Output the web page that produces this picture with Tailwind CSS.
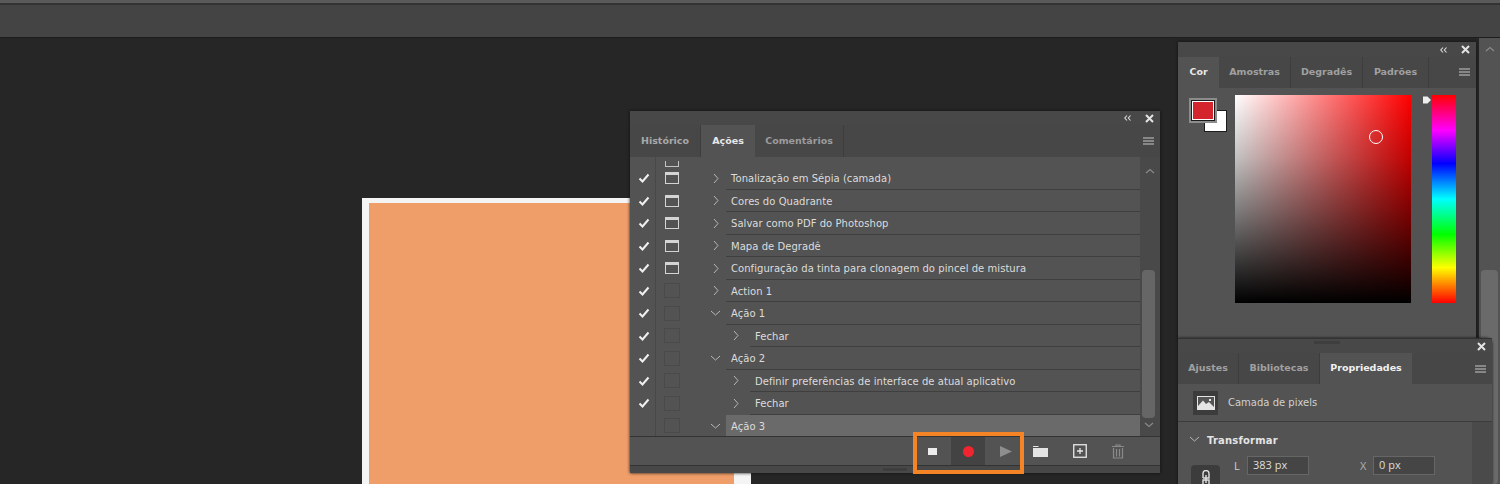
<!DOCTYPE html>
<html lang="pt">
<head>
<meta charset="utf-8">
<script src="https://cdn.jsdelivr.net/npm/@tailwindcss/browser@4"></script>
</head>
<body class="bg-[#262626]">
<div class="relative w-[1500px] h-[484px] overflow-hidden bg-[#262626] font-['DejaVu_Sans',sans-serif] text-[9.5px]">
  <!-- top bars -->
  <div class="h-[3px] bg-[#5a5a5a]"></div>
  <div class="h-[2px] bg-[#333333]"></div>
  <div class="h-[32px] bg-[#444444]"></div>
  <div class="h-px bg-[#1e1e1e]"></div>

  <!-- document canvas -->
  <div class="absolute left-[362px] top-[198px] w-[389px] h-[286px] bg-[#f4f4f4] pl-[7px] pt-[5px]">
    <div class="w-[365px] h-[281px] bg-[#ef9d69]"></div>
  </div>

  <!-- right scroll strip -->
  <div class="absolute left-[1479px] top-[38px] w-[21px] h-[446px] bg-[#535353]">
    <svg class="absolute left-[6px] top-[8px]" width="10" height="6" viewBox="0 0 10 6"><path d="M1 5 L5 1.5 L9 5" fill="none" stroke="#8a8a8a" stroke-width="1.2"/></svg>
    <div class="absolute left-[2px] top-[232px] w-[17px] h-[214px] bg-[#6a6a6a] rounded-sm"></div>
  </div>

  <!-- actions panel -->
  <div class="absolute left-[630px] top-[111px] w-[530px] h-[362px] bg-[#535353] flex flex-col shadow-[0_0_3px_#111]">
    <div class="h-[14px] bg-[#484848] flex items-center justify-end gap-[14px] pr-[6px] shrink-0">
      <svg width="7" height="6" viewBox="0 0 7 6"><path d="M3 .5 L.8 3 L3 5.5 M6.5 .5 L4.3 3 L6.5 5.5" fill="none" stroke="#ddd" stroke-width="1.1"/></svg>
      <svg width="9" height="9" viewBox="0 0 9 9"><path d="M1 1 L8 8 M8 1 L1 8" stroke="#e4e4e4" stroke-width="2"/></svg>
    </div>
    <div class="h-[32px] bg-[#474747] flex shrink-0 font-bold relative">
      <div class="w-[71px] flex items-center justify-center text-[#a9a9a9] border-r border-[#3d3d3d]">Histórico</div>
      <div class="w-[54px] flex items-center justify-center text-[#e8e8e8] bg-[#535353]">Ações</div>
      <div class="w-[89px] flex items-center justify-center text-[#9c9c9c] border-r border-[#3d3d3d]">Comentários</div>
      <svg class="absolute right-[6px] top-[12px]" width="11" height="8" viewBox="0 0 11 8"><path d="M0 1 H11 M0 4 H11 M0 7 H11" stroke="#c8c8c8" stroke-width="1"/></svg>
    </div>
    <div class="h-[280px] relative flex shrink-0 border-b border-[#333333] overflow-hidden text-[#dcdcdc] text-[10px]">
      <div class="w-[510px] flex flex-col shrink-0">
        <div class="h-[10px] flex shrink-0 items-end">
          <div class="w-[26px] h-full border-r border-[#484848]"></div>
          <div class="ml-[9px] w-[14px] h-[6px] border-x border-b border-[#c4c4c4]"></div>
        </div>
        <!-- rows -->
        <div class="h-[22.5px] flex items-center shrink-0">
          <div class="w-[26px] h-full flex items-center justify-center pl-[3px] border-r border-[#484848]"><svg width="12" height="10" viewBox="0 0 12 10"><path d="M1.5 5.5 L4.5 8.5 L10.5 1.5" fill="none" stroke="#f0f0f0" stroke-width="2"/></svg></div>
          <div class="w-[32px] pl-[9px] flex items-center"><div class="w-[14px] h-[12px] border border-[#d4d4d4] border-t-[3px]"></div></div>
          <div class="w-[37px] pl-[25px] flex items-center"><svg width="6" height="11" viewBox="0 0 6 11"><path d="M1 1 L5 5.5 L1 10" fill="none" stroke="#b8b8b8" stroke-width="1"/></svg></div>
          <div class="flex-1 h-full ml-[1px] pl-[5px] pt-[2px] flex items-center border-b border-[#3f3f3f] tracking-[.05px]">Tonalização em Sépia (camada)</div>
        </div>
        <div class="h-[22.5px] flex items-center shrink-0">
          <div class="w-[26px] h-full flex items-center justify-center pl-[3px] border-r border-[#484848]"><svg width="12" height="10" viewBox="0 0 12 10"><path d="M1.5 5.5 L4.5 8.5 L10.5 1.5" fill="none" stroke="#f0f0f0" stroke-width="2"/></svg></div>
          <div class="w-[32px] pl-[9px] flex items-center"><div class="w-[14px] h-[12px] border border-[#d4d4d4] border-t-[3px]"></div></div>
          <div class="w-[37px] pl-[25px] flex items-center"><svg width="6" height="11" viewBox="0 0 6 11"><path d="M1 1 L5 5.5 L1 10" fill="none" stroke="#b8b8b8" stroke-width="1"/></svg></div>
          <div class="flex-1 h-full ml-[1px] pl-[5px] pt-[2px] flex items-center border-b border-[#3f3f3f] tracking-[.05px]">Cores do Quadrante</div>
        </div>
        <div class="h-[22.5px] flex items-center shrink-0">
          <div class="w-[26px] h-full flex items-center justify-center pl-[3px] border-r border-[#484848]"><svg width="12" height="10" viewBox="0 0 12 10"><path d="M1.5 5.5 L4.5 8.5 L10.5 1.5" fill="none" stroke="#f0f0f0" stroke-width="2"/></svg></div>
          <div class="w-[32px] pl-[9px] flex items-center"><div class="w-[14px] h-[12px] border border-[#d4d4d4] border-t-[3px]"></div></div>
          <div class="w-[37px] pl-[25px] flex items-center"><svg width="6" height="11" viewBox="0 0 6 11"><path d="M1 1 L5 5.5 L1 10" fill="none" stroke="#b8b8b8" stroke-width="1"/></svg></div>
          <div class="flex-1 h-full ml-[1px] pl-[5px] pt-[2px] flex items-center border-b border-[#3f3f3f] tracking-[.05px]">Salvar como PDF do Photoshop</div>
        </div>
        <div class="h-[22.5px] flex items-center shrink-0">
          <div class="w-[26px] h-full flex items-center justify-center pl-[3px] border-r border-[#484848]"><svg width="12" height="10" viewBox="0 0 12 10"><path d="M1.5 5.5 L4.5 8.5 L10.5 1.5" fill="none" stroke="#f0f0f0" stroke-width="2"/></svg></div>
          <div class="w-[32px] pl-[9px] flex items-center"><div class="w-[14px] h-[12px] border border-[#d4d4d4] border-t-[3px]"></div></div>
          <div class="w-[37px] pl-[25px] flex items-center"><svg width="6" height="11" viewBox="0 0 6 11"><path d="M1 1 L5 5.5 L1 10" fill="none" stroke="#b8b8b8" stroke-width="1"/></svg></div>
          <div class="flex-1 h-full ml-[1px] pl-[5px] pt-[2px] flex items-center border-b border-[#3f3f3f] tracking-[.05px]">Mapa de Degradê</div>
        </div>
        <div class="h-[22.5px] flex items-center shrink-0">
          <div class="w-[26px] h-full flex items-center justify-center pl-[3px] border-r border-[#484848]"><svg width="12" height="10" viewBox="0 0 12 10"><path d="M1.5 5.5 L4.5 8.5 L10.5 1.5" fill="none" stroke="#f0f0f0" stroke-width="2"/></svg></div>
          <div class="w-[32px] pl-[9px] flex items-center"><div class="w-[14px] h-[12px] border border-[#d4d4d4] border-t-[3px]"></div></div>
          <div class="w-[37px] pl-[25px] flex items-center"><svg width="6" height="11" viewBox="0 0 6 11"><path d="M1 1 L5 5.5 L1 10" fill="none" stroke="#b8b8b8" stroke-width="1"/></svg></div>
          <div class="flex-1 h-full ml-[1px] pl-[5px] pt-[2px] flex items-center border-b border-[#3f3f3f] tracking-[.05px]">Configuração da tinta para clonagem do pincel de mistura</div>
        </div>
        <div class="h-[22.5px] flex items-center shrink-0">
          <div class="w-[26px] h-full flex items-center justify-center pl-[3px] border-r border-[#484848]"><svg width="12" height="10" viewBox="0 0 12 10"><path d="M1.5 5.5 L4.5 8.5 L10.5 1.5" fill="none" stroke="#f0f0f0" stroke-width="2"/></svg></div>
          <div class="w-[32px] pl-[8px] flex items-center"><div class="w-[16px] h-[15px] border border-[#4a4a4a]"></div></div>
          <div class="w-[37px] pl-[25px] flex items-center"><svg width="6" height="11" viewBox="0 0 6 11"><path d="M1 1 L5 5.5 L1 10" fill="none" stroke="#b8b8b8" stroke-width="1"/></svg></div>
          <div class="flex-1 h-full ml-[1px] pl-[5px] pt-[2px] flex items-center border-b border-[#3f3f3f] tracking-[.05px]">Action 1</div>
        </div>
        <div class="h-[22.5px] flex items-center shrink-0">
          <div class="w-[26px] h-full flex items-center justify-center pl-[3px] border-r border-[#484848]"><svg width="12" height="10" viewBox="0 0 12 10"><path d="M1.5 5.5 L4.5 8.5 L10.5 1.5" fill="none" stroke="#f0f0f0" stroke-width="2"/></svg></div>
          <div class="w-[32px] pl-[8px] flex items-center"><div class="w-[16px] h-[15px] border border-[#4a4a4a]"></div></div>
          <div class="w-[37px] pl-[22px] flex items-center"><svg width="11" height="6" viewBox="0 0 11 6"><path d="M1 1 L5.5 5 L10 1" fill="none" stroke="#b8b8b8" stroke-width="1"/></svg></div>
          <div class="flex-1 h-full ml-[1px] pl-[5px] pt-[2px] flex items-center border-b border-[#3f3f3f] tracking-[.05px]">Ação 1</div>
        </div>
        <div class="h-[22.5px] flex items-center shrink-0">
          <div class="w-[26px] h-full flex items-center justify-center pl-[3px] border-r border-[#484848]"><svg width="12" height="10" viewBox="0 0 12 10"><path d="M1.5 5.5 L4.5 8.5 L10.5 1.5" fill="none" stroke="#f0f0f0" stroke-width="2"/></svg></div>
          <div class="w-[32px] pl-[8px] flex items-center"><div class="w-[16px] h-[15px] border border-[#4a4a4a]"></div></div>
          <div class="w-[61px] pl-[45px] flex items-center"><svg width="6" height="11" viewBox="0 0 6 11"><path d="M1 1 L5 5.5 L1 10" fill="none" stroke="#b8b8b8" stroke-width="1"/></svg></div>
          <div class="flex-1 h-full ml-[1px] pl-[5px] pt-[2px] flex items-center border-b border-[#3f3f3f] tracking-[.05px]">Fechar</div>
        </div>
        <div class="h-[22.5px] flex items-center shrink-0">
          <div class="w-[26px] h-full flex items-center justify-center pl-[3px] border-r border-[#484848]"><svg width="12" height="10" viewBox="0 0 12 10"><path d="M1.5 5.5 L4.5 8.5 L10.5 1.5" fill="none" stroke="#f0f0f0" stroke-width="2"/></svg></div>
          <div class="w-[32px] pl-[8px] flex items-center"><div class="w-[16px] h-[15px] border border-[#4a4a4a]"></div></div>
          <div class="w-[37px] pl-[22px] flex items-center"><svg width="11" height="6" viewBox="0 0 11 6"><path d="M1 1 L5.5 5 L10 1" fill="none" stroke="#b8b8b8" stroke-width="1"/></svg></div>
          <div class="flex-1 h-full ml-[1px] pl-[5px] pt-[2px] flex items-center border-b border-[#3f3f3f] tracking-[.05px]">Ação 2</div>
        </div>
        <div class="h-[22.5px] flex items-center shrink-0">
          <div class="w-[26px] h-full flex items-center justify-center pl-[3px] border-r border-[#484848]"><svg width="12" height="10" viewBox="0 0 12 10"><path d="M1.5 5.5 L4.5 8.5 L10.5 1.5" fill="none" stroke="#f0f0f0" stroke-width="2"/></svg></div>
          <div class="w-[32px] pl-[8px] flex items-center"><div class="w-[16px] h-[15px] border border-[#4a4a4a]"></div></div>
          <div class="w-[61px] pl-[45px] flex items-center"><svg width="6" height="11" viewBox="0 0 6 11"><path d="M1 1 L5 5.5 L1 10" fill="none" stroke="#b8b8b8" stroke-width="1"/></svg></div>
          <div class="flex-1 h-full ml-[1px] pl-[5px] pt-[2px] flex items-center border-b border-[#3f3f3f] tracking-[.05px]">Definir preferências de interface de atual aplicativo</div>
        </div>
        <div class="h-[22.5px] flex items-center shrink-0">
          <div class="w-[26px] h-full flex items-center justify-center pl-[3px] border-r border-[#484848]"><svg width="12" height="10" viewBox="0 0 12 10"><path d="M1.5 5.5 L4.5 8.5 L10.5 1.5" fill="none" stroke="#f0f0f0" stroke-width="2"/></svg></div>
          <div class="w-[32px] pl-[8px] flex items-center"><div class="w-[16px] h-[15px] border border-[#4a4a4a]"></div></div>
          <div class="w-[61px] pl-[45px] flex items-center"><svg width="6" height="11" viewBox="0 0 6 11"><path d="M1 1 L5 5.5 L1 10" fill="none" stroke="#b8b8b8" stroke-width="1"/></svg></div>
          <div class="flex-1 h-full ml-[1px] pl-[5px] pt-[2px] flex items-center border-b border-[#3f3f3f] tracking-[.05px]">Fechar</div>
        </div>
        <div class="h-[22.5px] flex items-center shrink-0">
          <div class="w-[26px] h-full border-r border-[#484848]"></div>
          <div class="w-[32px] pl-[8px] flex items-center"><div class="w-[16px] h-[15px] border border-[#4a4a4a]"></div></div>
          <div class="w-[37px] pl-[22px] flex items-center"><svg width="11" height="6" viewBox="0 0 11 6"><path d="M1 1 L5.5 5 L10 1" fill="none" stroke="#b8b8b8" stroke-width="1"/></svg></div>
          <div class="flex-1 h-full ml-[1px] pl-[5px] pt-[1px] flex items-center bg-[#6a6a6a] tracking-[.05px]">Ação 3</div>
        </div>
      </div>
      <!-- list scrollbar -->
      <div class="flex-1 bg-[#494949] flex flex-col items-center relative">
        <svg class="mt-[11px]" width="10" height="6" viewBox="0 0 10 6"><path d="M1 5 L5 1.5 L9 5" fill="none" stroke="#8a8a8a" stroke-width="1.2"/></svg>
        <div class="absolute left-[2px] top-[113px] w-[13px] h-[148px] bg-[#666666] rounded-sm"></div>
        <svg class="absolute top-[265px] left-[4px]" width="10" height="6" viewBox="0 0 10 6"><path d="M1 1 L5 4.5 L9 1" fill="none" stroke="#8a8a8a" stroke-width="1.2"/></svg>
      </div>
    </div>
    <!-- footer -->
    <div class="h-[28px] flex items-center shrink-0 pl-[288px] bg-[#535353]">
      <div class="w-[33px] h-full flex items-center justify-center pr-[4px]"><div class="w-[9px] h-[7px] bg-[#ececec]"></div></div>
      <div class="w-[34px] h-full flex items-center justify-center bg-[#434343]"><div class="w-[11px] h-[11px] rounded-full bg-[#f0252f]"></div></div>
      <div class="w-[35px] h-full flex items-center justify-center pl-[6px]"><svg width="12" height="11" viewBox="0 0 12 11"><path d="M0 0 L12 5.5 L0 11 Z" fill="#8e8e8e"/></svg></div>
      <div class="w-[13px]"></div>
      <svg width="15" height="12" viewBox="0 0 15 12"><path d="M0 2 V1 H5 L6 2 Z M0 3 H15 V12 H0 Z" fill="#e4e4e4"/></svg>
      <div class="w-[25px]"></div>
      <svg width="14" height="14" viewBox="0 0 14 14"><rect x=".75" y=".75" width="12.5" height="12.5" fill="none" stroke="#e8e8e8" stroke-width="1.3"/><path d="M4 7 H10 M7 4 V10" stroke="#e8e8e8" stroke-width="1.3"/></svg>
      <div class="w-[24px]"></div>
      <svg width="14" height="15" viewBox="0 0 14 15"><path d="M1 2.5 H13 M5 2.5 V1 H9 V2.5 M2.5 4 V14 H11.5 V4 M5.5 5 V12.5 M8.5 5 V12.5" fill="none" stroke="#8a8a8a" stroke-width="1.2"/></svg>
    </div>
    <div class="h-[8px] bg-[#484848] border-t border-[#333333] flex items-center justify-center shrink-0">
      <div class="w-[24px] h-[3px] bg-[#3e3e3e]"></div>
    </div>
  </div>

  <!-- orange highlight -->
  <div class="absolute left-[913px] top-[432px] w-[111px] h-[42px] border-[4px] border-[#f58426]"></div>

  <!-- colour panel -->
  <div class="absolute left-[1178px] top-[42px] w-[298px] h-[296px] bg-[#535353] flex flex-col shadow-[0_0_3px_#111]">
    <div class="h-[15px] bg-[#484848] flex items-center justify-end gap-[14px] pr-[6px] shrink-0">
      <svg width="7" height="6" viewBox="0 0 7 6"><path d="M3 .5 L.8 3 L3 5.5 M6.5 .5 L4.3 3 L6.5 5.5" fill="none" stroke="#ddd" stroke-width="1.1"/></svg>
      <svg width="9" height="9" viewBox="0 0 9 9"><path d="M1 1 L8 8 M8 1 L1 8" stroke="#e4e4e4" stroke-width="2"/></svg>
    </div>
    <div class="h-[31px] bg-[#474747] flex shrink-0 font-bold relative">
      <div class="w-[41px] flex items-center justify-center text-[#e8e8e8] bg-[#535353]">Cor</div>
      <div class="w-[72px] flex items-center justify-center text-[#a0a0a0] border-r border-[#3d3d3d]">Amostras</div>
      <div class="w-[72px] flex items-center justify-center text-[#a0a0a0] border-r border-[#3d3d3d]">Degradês</div>
      <div class="w-[66px] flex items-center justify-center text-[#a0a0a0] border-r border-[#3d3d3d]">Padrões</div>
      <svg class="absolute right-[6px] top-[11px]" width="11" height="8" viewBox="0 0 11 8"><path d="M0 1 H11 M0 4 H11 M0 7 H11" stroke="#c8c8c8" stroke-width="1"/></svg>
    </div>
    <div class="flex-1 relative">
      <div class="absolute left-[26px] top-[22px] w-[23px] h-[22px] bg-white border border-[#1c1c1c]"></div>
      <div class="absolute left-[11px] top-[10px] w-[28px] h-[25px] bg-[#1c1c1c] border-[2px] border-[#8c8c8c] flex items-center justify-center"><div class="w-[22px] h-[19px] bg-[#d4252f] border border-white"></div></div>
      <div class="absolute left-[57px] top-[7px] w-[176px] h-[208px] bg-[linear-gradient(to_bottom,transparent,rgba(0,0,0,.24)_30%,rgba(0,0,0,.5)_55%,#000),linear-gradient(to_right,#fff,#ff0000)]">
        <div class="absolute left-[134px] top-[35px] w-[14px] h-[14px] rounded-full border border-white"></div>
      </div>
      <svg class="absolute left-[244px] top-[7px]" width="10" height="10" viewBox="0 0 10 10"><path d="M1 1.5 H5.5 L9 5 L5.5 8.5 H1 Z" fill="#eeeeee"/></svg>
      <div class="absolute left-[254px] top-[7px] w-[24px] h-[208px] bg-[linear-gradient(to_bottom,#ff0000,#ff00ff_17%,#0000ff_33%,#00ffff_50%,#00ff00_67%,#ffff00_83%,#ff0000)]"></div>
    </div>
  </div>

  <!-- properties panel -->
  <div class="absolute left-[1178px] top-[338px] w-[314px] h-[146px] bg-[#535353] rounded-tr-md flex flex-col shadow-[0_0_3px_#111]">
    <div class="h-[15px] bg-[#484848] border-t border-[#333333] flex items-center justify-end pr-[6px] shrink-0 relative">
      <div class="absolute left-[136px] top-[2px] w-[26px] h-[3px] bg-[#3e3e3e]"></div>
      <svg width="9" height="9" viewBox="0 0 9 9"><path d="M1 1 L8 8 M8 1 L1 8" stroke="#e4e4e4" stroke-width="2"/></svg>
    </div>
    <div class="h-[31px] bg-[#474747] flex shrink-0 font-bold relative">
      <div class="w-[61px] flex items-center justify-center text-[#a0a0a0] border-r border-[#3d3d3d]">Ajustes</div>
      <div class="w-[81px] flex items-center justify-center text-[#a0a0a0] border-r border-[#3d3d3d]">Bibliotecas</div>
      <div class="w-[92px] flex items-center justify-center text-[#f0f0f0] bg-[#535353]">Propriedades</div>
      <svg class="absolute right-[6px] top-[12px]" width="11" height="8" viewBox="0 0 11 8"><path d="M0 1 H11 M0 4 H11 M0 7 H11" stroke="#c8c8c8" stroke-width="1"/></svg>
    </div>
    <div class="h-[38px] flex items-center pl-[15px] gap-[10px] border-b border-[#3c3c3c] shrink-0 text-[#d0d0d0] text-[10px]">
      <div class="w-[25px] h-[24px] bg-[#3c3c3c] flex items-center justify-center">
        <svg width="18" height="14" viewBox="0 0 18 14"><path d="M0 0 H18 V14 H0 Z" fill="#e4e4e4"/><path d="M1 1 H17 V11 L12 6 L9 8 L6 4.5 L1 10 Z" fill="#555555"/><rect x="12" y="3" width="2" height="2" fill="#e4e4e4"/></svg>
      </div>
      Camada de pixels
    </div>
    <div class="flex-1 flex relative overflow-hidden">
      <svg class="absolute left-[11px] top-[14px]" width="11" height="6" viewBox="0 0 11 6"><path d="M1 1 L5.5 5 L10 1" fill="none" stroke="#b8b8b8" stroke-width="1"/></svg>
      <div class="absolute left-[29px] top-[11px] font-bold text-[#e4e4e4] tracking-[.2px] text-[10px]">Transformar</div>
      <div class="absolute left-[56px] top-[36px] text-[#d0d0d0] text-[11px] font-['Open_Sans',sans-serif]">L</div>
      <div class="absolute left-[69px] top-[34px] w-[62px] h-[19px] bg-[#454545] border border-[#666666] text-[#dedede] pl-[5px] flex items-center text-[11px] font-['Open_Sans',sans-serif]">383 px</div>
      <div class="absolute left-[182px] top-[36px] text-[#b0b0b0] text-[11px] font-['Open_Sans',sans-serif]">X</div>
      <div class="absolute left-[195px] top-[34px] w-[62px] h-[19px] bg-[#454545] border border-[#666666] text-[#dedede] pl-[5px] flex items-center text-[11px] font-['Open_Sans',sans-serif]">0 px</div>
      <div class="absolute left-[13px] top-[43px] w-[29px] h-[30px] bg-[#3c3c3c] rounded-sm flex justify-center pt-[5px]">
        <svg width="10" height="18" viewBox="0 0 10 18"><path d="M2 8 V3.5 A3 3 0 0 1 8 3.5 V8 H2 M2 10 H8 V15 A3 3 0 0 1 2 15 Z M5 5 V13" fill="none" stroke="#e0e0e0" stroke-width="1.4"/></svg>
      </div>
      <div class="absolute right-0 top-0 bottom-0 w-[20px] bg-[#4a4a4a]"></div>
    </div>
  </div>
</div>
</body>
</html>
